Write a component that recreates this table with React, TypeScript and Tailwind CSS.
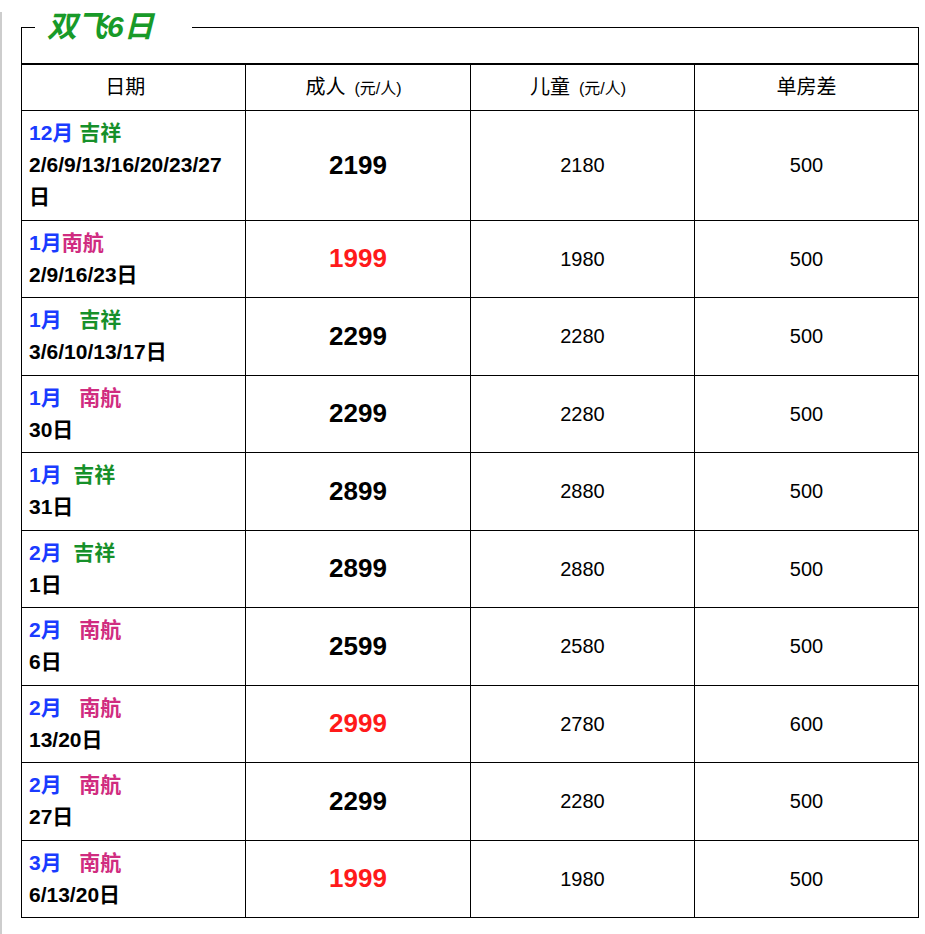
import React from 'react';

type Row = {
  month: string;
  gap: number;
  airline: '吉祥' | '南航';
  dates: string;
  adult: string;
  hot?: boolean;
  child: string;
  single: string;
};

const ROWS: Row[] = [
  { month: '12月', gap: 1, airline: '吉祥', dates: '2/6/9/13/16/20/23/27日', adult: '2199', child: '2180', single: '500' },
  { month: '1月', gap: 0, airline: '南航', dates: '2/9/16/23日', adult: '1999', hot: true, child: '1980', single: '500' },
  { month: '1月', gap: 3, airline: '吉祥', dates: '3/6/10/13/17日', adult: '2299', child: '2280', single: '500' },
  { month: '1月', gap: 3, airline: '南航', dates: '30日', adult: '2299', child: '2280', single: '500' },
  { month: '1月', gap: 2, airline: '吉祥', dates: '31日', adult: '2899', child: '2880', single: '500' },
  { month: '2月', gap: 2, airline: '吉祥', dates: '1日', adult: '2899', child: '2880', single: '500' },
  { month: '2月', gap: 3, airline: '南航', dates: '6日', adult: '2599', child: '2580', single: '500' },
  { month: '2月', gap: 3, airline: '南航', dates: '13/20日', adult: '2999', hot: true, child: '2780', single: '600' },
  { month: '2月', gap: 3, airline: '南航', dates: '27日', adult: '2299', child: '2280', single: '500' },
  { month: '3月', gap: 3, airline: '南航', dates: '6/13/20日', adult: '1999', hot: true, child: '1980', single: '500' },
];

const FONT = "font-['Liberation_Sans','Noto_Sans_CJK_SC',sans-serif]";

function HeadCell({ label, unit, trail = 0, last }: { label: string; unit?: boolean; trail?: number; last?: boolean }) {
  return (
    <th
      className={`border-t-2 border-b border-black p-0 text-center align-middle text-[20px] font-normal leading-[45px] text-black ${
        last ? '' : 'border-r'
      }`}
    >
      {label}
      {unit && <span className="text-[16px] leading-none">{'\u00a0\u00a0'}(元/人){'\u00a0\u00a0'}</span>}
      {'\u00a0'.repeat(trail)}
    </th>
  );
}

export default function App() {
  return (
    <div className={`min-h-screen border-l-2 border-[#cdcdcd] bg-white pb-4 ${FONT}`}>
      <fieldset className="ml-[19px] mt-[12px] w-[898px] border border-black">
        <legend className="ml-[13px] pl-3 pr-[38px] text-[30px] font-bold italic leading-[30px] text-[#189a28]">
          双飞6日
        </legend>

        <table className="mt-[21px] w-full table-fixed border-separate border-spacing-0">
          <colgroup>
            <col className="w-[224px]" />
            <col className="w-[225px]" />
            <col className="w-[224px]" />
            <col className="w-[223px]" />
          </colgroup>
          <thead>
            <tr>
              <HeadCell label="日期" trail={3} />
              <HeadCell label="成人" unit />
              <HeadCell label="儿童" unit />
              <HeadCell label="单房差" last />
            </tr>
          </thead>
          <tbody>
            {ROWS.map((r, i) => {
              const bottom = i < ROWS.length - 1 ? 'border-b' : '';
              return (
                <tr key={i}>
                  <td className={`border-r border-black ${bottom} py-[6.25px] pl-[7px] pr-[7px] align-top text-[21px] font-bold leading-[32px]`}>
                    <div>
                      <span className="text-[#1a3bff]">{r.month}</span>
                      {'\u00a0'.repeat(r.gap)}
                      <span className={r.airline === '吉祥' ? 'text-[#16902a]' : 'text-[#d02c80]'}>{r.airline}</span>
                    </div>
                    <div className="text-black">{r.dates}</div>
                  </td>
                  <td
                    className={`border-r border-black ${bottom} p-0 text-center align-middle text-[26px] font-bold ${
                      r.hot ? 'text-[#ff1a1a]' : 'text-black'
                    }`}
                  >
                    {r.adult}
                  </td>
                  <td className={`border-r border-black ${bottom} p-0 text-center align-middle text-[20px] text-black`}>
                    {r.child}
                  </td>
                  <td className={`border-black ${bottom} p-0 text-center align-middle text-[20px] text-black`}>
                    {r.single}
                  </td>
                </tr>
              );
            })}
          </tbody>
        </table>
      </fieldset>
    </div>
  );
}
